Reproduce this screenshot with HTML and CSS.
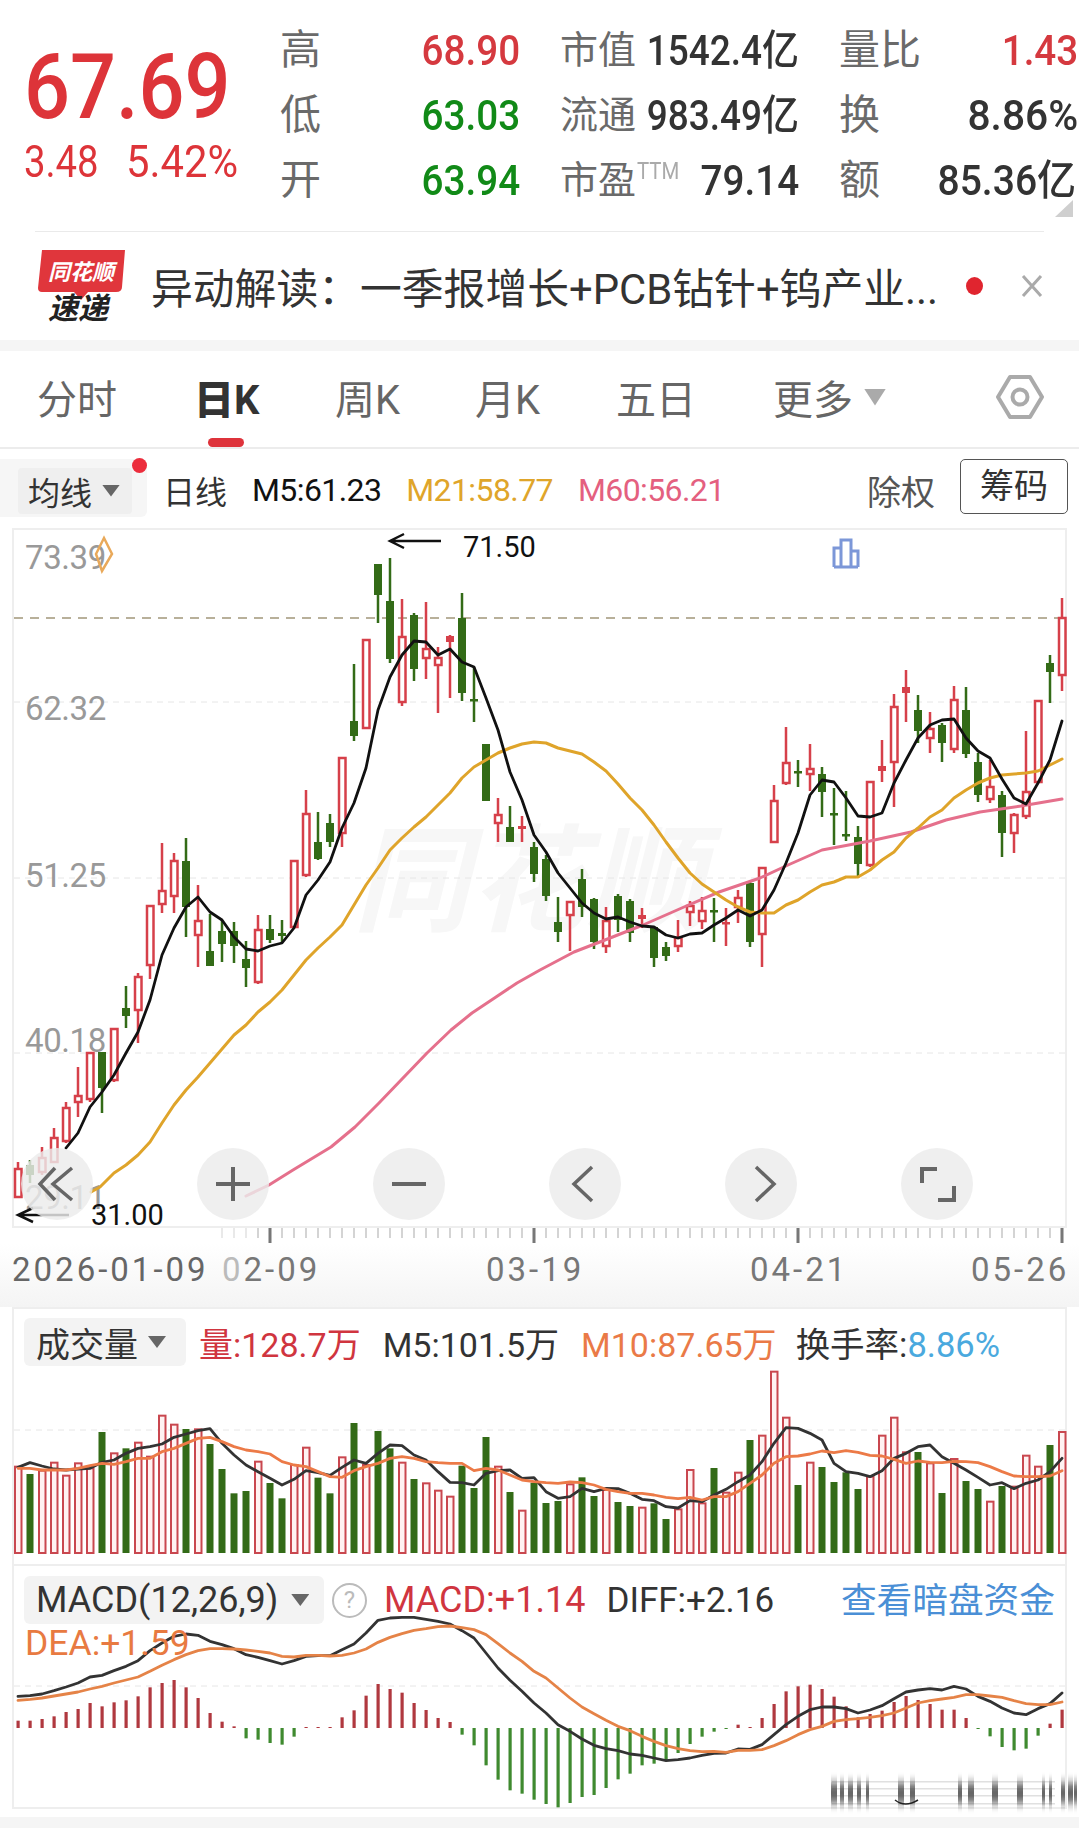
FILE: index.html
```html
<!DOCTYPE html>
<html lang="zh-CN">
<head>
<meta charset="utf-8">
<title>K线</title>
<link rel="stylesheet" href="styles.css">
</head>
<body>
<div class="page">
  <section class="quote">
    <div class="price">
      <div class="price-main">67.69</div>
      <div class="price-sub"><span class="sub-a">3.48</span><span class="sub-b">5.42%</span></div>
    </div>
    <div class="stats">
      <div class="cell"><span class="lab lab-lg lab-first">高</span><span class="num up">68.90</span></div>
      <div class="cell"><span class="lab">市值</span><span class="num tight">1542.4亿</span></div>
      <div class="cell"><span class="lab lab-lg">量比</span><span class="num up">1.43</span></div>
      <div class="cell"><span class="lab lab-lg lab-first">低</span><span class="num down">63.03</span></div>
      <div class="cell"><span class="lab">流通</span><span class="num tight">983.49亿</span></div>
      <div class="cell"><span class="lab lab-lg">换</span><span class="num wide">8.86%</span></div>
      <div class="cell"><span class="lab lab-lg lab-first">开</span><span class="num down">63.94</span></div>
      <div class="cell"><span class="lab">市盈<sup class="ttm">TTM</sup></span><span class="num">79.14</span></div>
      <div class="cell"><span class="lab lab-lg">额</span><span class="num inset">85.36亿</span></div>
    </div>
    <i class="corner"></i>
  </section>
  <div class="rule"></div>

  <section class="news">
    <svg class="logo" viewBox="0 0 88 72" width="88" height="72" aria-hidden="true">
      <path d="M4 0H87L84 37Q84 42 78 42H50L43 50L36 42H4Q0 42 0 38Z" fill="#e0363c"/>
      <text x="43" y="30" class="logo-top">同花顺</text>
      <text x="40" y="69" class="logo-bot">速递</text>
    </svg>
    <div class="news-text">异动解读：一季报增长+PCB钻针+钨产业...</div>
    <i class="news-dot"></i>
    <svg class="news-close" viewBox="0 0 22 22" width="22" height="22" aria-hidden="true"><path d="M2 1L20 21M20 1L2 21"/></svg>
  </section>
  <div class="band"></div>

  <nav class="tabs">
    <span class="tab">分时</span>
    <span class="tab tab-on"><b class="tab-ri">日</b>K<i class="tab-bar"></i></span>
    <span class="tab">周K</span>
    <span class="tab">月K</span>
    <span class="tab">五日</span>
    <span class="tab tab-more">更多<i class="tab-tri"></i></span>
    <svg class="gear" viewBox="0 0 48 44" width="48" height="44" aria-hidden="true"><path d="M14 2H34L46 22L34 42H14L2 22Z"/><circle cx="24" cy="22" r="7.5"/></svg>
  </nav>

  <div class="ma-row">
    <div class="ma-btn"><div class="ma-btn-in">均线<i class="tri"></i></div><i class="ma-dot"></i></div>
    <span class="ma-t ma-cn">日线</span>
    <span class="ma-t ma-5">M5:61.23</span>
    <span class="ma-t ma-21">M21:58.77</span>
    <span class="ma-t ma-60">M60:56.21</span>
    <span class="ma-fq">除权</span>
    <span class="ma-chip">筹码</span>
  </div>

  <section class="panel panel-main">
    <svg id="main" class="chart" viewBox="14 530 1051 696" width="1051" height="696" aria-label="日K线图"></svg>
    <div class="ctrls">
      <button class="ctrl"><svg viewBox="0 0 72 72" width="72" height="72"><path d="M34 20L19 36L34 52M51 20L32 36L51 52"/></svg></button>
      <button class="ctrl"><svg viewBox="0 0 72 72" width="72" height="72"><path class="thick" d="M19 36H53M36 19V53"/></svg></button>
      <button class="ctrl"><svg viewBox="0 0 72 72" width="72" height="72"><path class="thick" d="M19 36H53"/></svg></button>
      <button class="ctrl"><svg viewBox="0 0 72 72" width="72" height="72"><path d="M43 19L25 36L43 53"/></svg></button>
      <button class="ctrl"><svg viewBox="0 0 72 72" width="72" height="72"><path d="M31 19L49 36L31 53"/></svg></button>
      <button class="ctrl"><svg viewBox="0 0 72 72" width="72" height="72"><path class="thick" d="M36 21H21V35M37 52H53V38"/></svg></button>
    </div>
  </section>

  <section class="axis">
    <svg id="ticks" class="ticks" viewBox="0 1228 1079 16" width="1079" height="16" aria-hidden="true"></svg>
    <div class="dates">
      <span class="date date-first">2026-01-09</span>
      <span class="date"><span class="dim">0</span>2-09</span>
      <span class="date">03-19</span>
      <span class="date">04-21</span>
      <span class="date">05-26</span>
    </div>
  </section>

  <section class="panel panel-vol">
    <div class="legend">
      <div class="pick">成交量<i class="tri"></i></div>
      <span class="lg up-t">量:128.7万</span>
      <span class="lg">M5:101.5万</span>
      <span class="lg or-t">M10:87.65万</span>
      <span class="lg lg-rate">换手率:<span class="bl-t">8.86%</span></span>
    </div>
    <svg id="vol" class="chart" viewBox="14 1309 1051 255" width="1051" height="255" aria-label="成交量图"></svg>
  </section>

  <section class="panel panel-macd">
    <div class="legend legend-macd">
      <div class="pick pick-macd">MACD(12,26,9)<i class="tri"></i></div>
      <span class="help">?</span>
      <span class="lg up-t">MACD:+1.14</span>
      <span class="lg lg-diff">DIFF:+2.16</span>
      <span class="lg-link">查看暗盘资金</span>
      <span class="lg-dea">DEA:+1.59</span>
    </div>
    <svg id="macd" class="chart" viewBox="14 1568 1051 239" width="1051" height="239" aria-label="MACD图"></svg>
  </section>
  <div class="foot"><div class="band"></div></div>
</div>
<script src="script.js"></script>
</body>
</html>
```
FILE: styles.css
```css
* { box-sizing: border-box; }
html, body { margin: 0; padding: 0; background: #fff; overflow: hidden; }
body { font-family: Roboto, "Noto Sans CJK SC", sans-serif; color: #333; }
.page { width: 1079px; height: 1832px; overflow: hidden; }
i { display: block; }

/* quote header */
.quote { position: relative; height: 231px; display: flex; }
.price { width: 282px; padding: 34px 0 0 24px; color: #dd3439; }
.price-main { font-size: 91px; line-height: 106px; font-weight: 500; transform: scaleX(.89); transform-origin: left; white-space: nowrap; }
.price-sub { display: flex; margin-top: -4px; font-size: 44px; line-height: 52px; white-space: nowrap; }
.sub-a { width: 102px; transform: scaleX(.87); transform-origin: left; }
.sub-b { transform: scaleX(.95); transform-origin: left; }
.stats { flex: 1; display: grid; grid-template-columns: 238px 239px 239px; column-gap: 40px; grid-auto-rows: 65px; padding-top: 18px; margin-right: -7px; }
.cell { display: flex; justify-content: space-between; align-items: center; white-space: nowrap; }
.lab { flex: none; font-size: 38px; line-height: 65px; color: #6a6a6a; }
.lab-lg { font-size: 41px; }
.lab-first { margin-left: -2px; }
.ttm { font-size: 24px; line-height: 0; color: #aaa; vertical-align: 14px; display: inline-block; transform: scaleX(.85); transform-origin: left; margin-left: 1px; }
.num { flex: none; margin-left: -40px; font-size: 42px; font-weight: 500; line-height: 65px; color: #333; display: inline-block; transform: scaleX(.92); transform-origin: right; }
.num.tight { transform: scaleX(.88); }
.num.wide { transform: scaleX(.97); }
.num.inset { margin-right: 2px; transform: scaleX(.93); }
.up { color: #d5393f; }
.down { color: #118a17; }
.corner { position: absolute; right: 6px; top: 200px; width: 18px; height: 17px; background: #cfcfcf; clip-path: polygon(100% 0, 100% 100%, 0 100%); }
.rule { height: 1px; margin: 0 35px; background: #eaeaea; }

/* news */
.news { height: 108px; display: flex; align-items: center; padding: 0 36px 0 38px; }
.logo { flex: none; margin-right: 25px; overflow: visible; }
.logo-top { font-size: 22px; font-weight: 700; font-style: italic; fill: #fff; text-anchor: middle; }
.logo-bot { font-size: 30px; font-weight: 700; font-style: italic; fill: #222; text-anchor: middle; }
.news-text { flex: 1; font-size: 41.8px; color: #333; white-space: nowrap; }
.news-dot { flex: none; width: 17px; height: 18px; border-radius: 50%; background: #e0252f; }
.news-close { flex: none; margin-left: 38px; fill: none; stroke: #aaa; stroke-width: 3; }
.band { height: 11px; background: #f5f5f5; }

/* tabs */
.tabs { height: 98px; display: grid; grid-template-columns: 157px 141px 140px 141px 157px 1fr auto; align-items: center; padding: 0 35px 4px 37px; border-bottom: 2px solid #ececec; }
.tab { position: relative; font-size: 40px; color: #666; white-space: nowrap; }
.tab-on { font-weight: 700; color: #333; }
.tab-ri { font-weight: 900; }
.tab-bar { position: absolute; left: 14px; top: 70px; width: 36px; height: 9px; border-radius: 5px; background: #de333b; }
.tab-more { display: flex; align-items: center; }
.tab-tri { margin: 0 0 0 11px; width: 22px; height: 17px; background: #aaa; clip-path: polygon(0 0, 100% 0, 50% 100%); }
.gear { fill: none; stroke: #aaa; stroke-width: 4; stroke-linejoin: round; }

/* MA row */
.ma-row { height: 79px; display: flex; align-items: center; gap: 25px; padding-right: 11px; }
.ma-btn { position: relative; flex: none; width: 147px; height: 58px; margin: -2px -9px 0 0; padding: 9px 15px 3px 18px; background: #f6f6f6; border-radius: 0 6px 6px 0; }
.ma-btn-in { height: 100%; display: flex; align-items: center; padding-left: 10px; background: #efefef; border-radius: 4px; font-size: 32px; color: #333; }
.tri { flex: none; margin-left: 10px; width: 18px; height: 12px; background: #666; clip-path: polygon(0 0, 100% 0, 50% 100%); }
.ma-dot { position: absolute; left: 132px; top: -1px; width: 15px; height: 15px; border-radius: 50%; background: #ec2d3c; }
.ma-t { font-size: 32px; letter-spacing: -.6px; white-space: nowrap; margin-top: 2px; }
.ma-cn { letter-spacing: 0; color: #333; }
.ma-5 { color: #111; }
.ma-21 { color: #dfa52a; }
.ma-60 { color: #e4607f; }
.ma-fq { margin-left: auto; font-size: 34px; color: #555; margin-top: 4px; }
.ma-chip { width: 108px; height: 55px; margin-left: 0; margin-top: -4px; border: 1.5px solid #555; border-radius: 5px; text-align: center; font-size: 34px; line-height: 53px; color: #333; }

/* panels */
.panel { position: relative; width: 1055px; margin-left: 12px; border: 2px solid #eee; background: #fff; }
.panel-main { height: 700px; }
.panel-vol { height: 259px; }
.panel-macd { height: 243px; border-top: 0; margin-top: 0; }
.chart { display: block; overflow: visible; }
.ctrls { position: absolute; left: 7px; top: 618px; display: flex; gap: 104px; }
.ctrl { flex: none; width: 72px; height: 72px; padding: 0; border: 0; border-radius: 50%; background: rgba(236, 236, 236, .82); }
.ctrl svg { display: block; fill: none; stroke: #666; stroke-width: 3.5; }
.ctrl .thick { stroke-width: 4; }

/* chart text */
.ylab { font-size: 33px; fill: #999; letter-spacing: -.4px; }
.mark { font-size: 29px; fill: #111; }
.wm { font-size: 116px; font-weight: 700; font-style: italic; fill: #f7f7f7; }

/* axis */
.axis { height: 79px; background: linear-gradient(#fff 20%, #f4f4f4); }
.ticks { display: block; }
.dates { display: grid; grid-template-columns: 210px 264px 264px 221px auto; padding: 1px 0 0 12px; }
.date { font-size: 33px; letter-spacing: 3px; color: #777; line-height: 50px; white-space: nowrap; }
.date-first { color: #666; }
.dim { color: #bbb; }

/* legends */
.legend { position: absolute; left: 10px; top: 8px; right: 0; display: flex; align-items: center; gap: 22px; white-space: nowrap; z-index: 1; }
.pick { height: 48px; width: 162px; margin-right: -9px; display: flex; align-items: center; padding-left: 12px; background: #f3f3f3; border-radius: 6px; font-size: 34px; color: #333; }
.lg { font-size: 34px; color: #333; }
.lg-rate { margin-left: -3px; font-size: 34.5px; }
.up-t { color: #d0353f; }
.or-t { color: #ea7a47; }
.bl-t { color: #4aa9de; }
.legend-macd { top: 10px; gap: 0; }
.legend-macd .lg { font-size: 36px; }
.pick-macd { width: 300px; margin: 0 8px 0 0; font-size: 36px; }
.pick-macd .tri { margin-left: 13px; }
.pick .tri { width: 18px; }
.help { flex: none; width: 35px; height: 35px; margin-right: 17px; border: 2px solid #bbb; border-radius: 50%; text-align: center; font-size: 24px; line-height: 30px; color: #bbb; }
.legend-macd .lg-diff { margin-left: 21px; font-size: 35px; }
.lg-link { margin-left: auto; margin-right: 10px; font-size: 35.7px; line-height: 44px; position: relative; top: 1px; color: #4a8fd6; }
.lg-dea { position: absolute; left: 1px; top: 45px; font-size: 35.5px; line-height: 44px; color: #e87a41; }

.foot { height: 23px; padding-top: 8px; }
```
FILE: script.js
```js
var SVG_NS = 'http://www.w3.org/2000/svg';
function el(parent, name, attrs, text) {
  var n = document.createElementNS(SVG_NS, name);
  for (var k in attrs) n.setAttribute(k, attrs[k]);
  if (text) n.textContent = text;
  parent.appendChild(n);
  return n;
}
var X = function (i) { return 18 + 12 * i; };
var RED = '#d6404a', GREEN = '#336b17';

function line(svg, pts, color, w) {
  el(svg, 'polyline', { points: pts.map(function (p) { return p[0] + ',' + p[1]; }).join(' '), fill: 'none', stroke: color, 'stroke-width': w, 'stroke-linejoin': 'round', 'stroke-linecap': 'round' });
}
function series(start, ys) { return ys.map(function (y, i) { return [X(start + i), y]; }); }

/* ---------- main chart ---------- */
var main = document.getElementById('main');
el(main, 'text', { x: 353, y: 922, 'class': 'wm', textLength: 350 }, '同花顺');
[702, 878, 1053].forEach(function (y) {
  el(main, 'line', { x1: 14, x2: 1065, y1: y, y2: y, stroke: '#e6e6e6', 'stroke-width': 1, 'stroke-dasharray': '6 5' });
});
el(main, 'line', { x1: 14, x2: 1065, y1: 618, y2: 618, stroke: '#b8b09a', 'stroke-width': 2, 'stroke-dasharray': '9 7' });
[['73.39', 569], ['62.32', 720], ['51.25', 887], ['40.18', 1052], ['29.11', 1209]].forEach(function (l) {
  el(main, 'text', { x: 25, y: l[1], 'class': 'ylab' }, l[0]);
});

/* i order: colour, wick top, wick bottom, body top, body bottom */
var C = [
['r',1162,1198,1168,1198],['g',1160,1183,1165,1175],['r',1147,1175,1157,1173],['r',1128,1163,1137,1163],['r',1102,1143,1107,1142],
['r',1067,1117,1095,1103],['r',1052,1102,1052,1100],['g',1052,1113,1052,1088],['r',1028,1082,1028,1081],['g',986,1028,1008,1016],
['r',973,1043,976,1011],['r',905,979,905,966],['r',843,913,890,905],['r',853,913,860,897],['g',838,937,861,907],
['r',885,967,920,936],['g',914,966,951,966],['g',920,962,931,944],['g',922,963,931,946],['g',941,987,959,968],
['r',915,984,929,983],['g',915,943,929,940],['g',920,943,933,936],['r',860,928,860,928],['r',790,877,813,876],
['g',812,860,842,859],['g',814,847,823,842],['r',757,847,757,834],['g',664,741,721,736],['r',639,729,639,729],
['g',564,623,564,595],['g',558,663,601,659],['r',599,706,636,703],['g',613,681,615,669],['r',602,679,648,659],
['r',647,713,657,666],['r',635,698,636,642],['g',593,701,618,693],['g',667,722,699,701],['g',744,801,744,801],
['r',798,842,814,824],['g',806,842,827,842],['r',816,842,826,829],['g',842,882,847,874],['g',855,901,859,896],
['g',897,942,922,932],['r',901,951,901,916],['g',869,917,879,907],['g',898,949,899,942],['r',907,953,920,947],
['g',894,932,896,920],['g',899,942,901,933],['r',908,928,915,919],['g',927,967,927,958],['g',942,961,947,956],
['r',920,952,937,947],['r',901,926,905,913],['r',897,929,910,922],['g',898,942,910,912],['r',908,946,922,923],
['r',890,923,897,908],['g',882,947,883,942],['r',867,967,867,935],['r',785,843,800,843],['r',727,785,762,784],
['g',760,787,771,773],['r',744,791,768,775],['g',767,817,774,792],['g',788,845,813,814],['g',791,841,834,836],
['g',826,878,837,864],['r',781,867,781,866],['r',740,782,766,771],['r',694,807,706,763],['r',670,722,687,693],
['g',695,743,710,731],['r',712,753,728,739],['g',723,762,725,743],['r',686,753,699,750],['g',687,758,710,754],
['g',753,802,762,795],['r',760,803,786,800],['g',791,857,795,833],['r',813,853,814,834],['r',731,819,791,817],
['r',700,783,700,783],['g',655,703,663,672],['r',598,691,617,676]];
C.forEach(function (c, i) {
  var x = X(i), col = c[0] === 'r' ? RED : GREEN, h = c[4] - c[3];
  el(main, 'rect', { x: x - 1.25, y: c[1], width: 2.5, height: c[2] - c[1], fill: col });
  if (c[0] === 'g' || h < 7) {
    el(main, 'rect', { x: x - 4, y: c[3], width: 8, height: Math.max(h, 2.5), fill: col });
  } else {
    el(main, 'rect', { x: x - 3, y: c[3] + 1, width: 6.5, height: h - 2, fill: '#fff', stroke: col, 'stroke-width': 2.5 });
  }
});

line(main, [[246,1196],[269,1185],[293,1170],[331,1147],[355,1127],[379,1103],[403,1078],[427,1053],[451,1030],[472,1013],[496,997],[517,983],[540,970],[574,952],[605,940],[643,925],[684,907],[719,892],[760,878],[788,865],[822,850],[870,841],[911,832],[946,820],[980,812],[1021,806],[1062,799]], '#e5708c', 3);
line(main, [[91,1192],[100,1187],[114,1173]].concat(series(9, [1165,1155,1142,1123,1105,1090,1077,1063,1049,1035,1025,1012,1002,990,975,960,948,937,925,905,885,868,850,838,827,817,805,793,778,767,760,753,748,744,742,743,748,751,754,762,771,784,798,810,825,842,858,873,884,892,900,907,912,913,913,905,900,892,885,882,877,877,870,860,852,838,828,817,810,798,790,783,778,775,774,773,771,765,759])), '#dfa42a', 3);
line(main, series(4, [1148,1133,1107,1092,1075,1053,1032,1000,955,928,907,897,912,920,937,949,951,946,943,928,895,880,862,828,803,768,710,677,655,641,642,655,649,662,667,698,730,772,800,835,852,873,888,903,913,919,917,922,926,927,935,938,934,933,925,918,910,916,910,890,863,833,795,780,782,798,816,817,813,783,760,738,725,720,719,738,751,758,779,798,804,783,760,721]), '#111', 2.8);

/* high / low marks */
el(main, 'path', { d: 'M441 541H390M404 534L390 541L404 548', fill: 'none', stroke: '#111', 'stroke-width': 2.5 });
el(main, 'text', { x: 463, y: 557, 'class': 'mark' }, '71.50');
el(main, 'path', { d: 'M69 1215H18M33 1208L18 1215L33 1222', fill: 'none', stroke: '#111', 'stroke-width': 2.5 });
el(main, 'text', { x: 91, y: 1225, 'class': 'mark' }, '31.00');

/* diamond and bar-chart markers */
el(main, 'path', { d: 'M104 538L112 554L102 571L96 554Z', fill: 'none', stroke: '#e9a95a', 'stroke-width': 2.5 });
el(main, 'path', { d: 'M834 567V548H841V567M841 567V540H851V567M851 567V551H858V567M834 567H858', fill: 'none', stroke: '#7c97d8', 'stroke-width': 3 });

/* ---------- tick axis ---------- */
var ticks = document.getElementById('ticks');
for (var t = 17; t < 88; t++) {
  var major = (t === 21 || t === 43 || t === 65 || t === 87);
  el(ticks, 'rect', { x: X(t) - (major ? 1.5 : .5), y: 1228, width: major ? 3 : 1, height: major ? 15 : 10, fill: major ? '#777' : '#aaa', opacity: t < 20 ? .5 : 1 });
}

/* ---------- volume ---------- */
var vol = document.getElementById('vol');
var vy = function (z) { return 1300 + z / 3; };
el(vol, 'line', { x1: 14, x2: 1065, y1: 1430, y2: 1430, stroke: '#e6e6e6', 'stroke-dasharray': '6 5' });
var V = [['r',500],['g',522],['r',512],['r',488],['r',527],['r',490],['r',505],['g',396],['r',460],['g',445],['r',428],['r',470],['r',347],['r',374],['g',387],['r',388],['g',432],['g',507],['g',580],['g',573],['r',485],['g',549],['g',595],['r',495],['r',443],['g',533],['g',580],['r',472],['g',369],['r',495],['g',393],['g',445],['r',488],['g',537],['r',550],['r',572],['r',590],['g',497],['g',564],['g',411],['r',500],['g',576],['r',632],['g',548],['g',609],['g',603],['r',553],['g',532],['g',588],['r',570],['g',606],['g',618],['r',623],['g',610],['g',657],['r',628],['r',510],['r',610],['g',504],['r',578],['r',518],['g',420],['r',407],['r',215],['r',353],['g',555],['r',488],['g',501],['g',546],['g',517],['g',567],['r',530],['r',407],['r',353],['r',457],['g',456],['r',490],['g',579],['r',477],['g',543],['g',567],['r',605],['g',558],['r',560],['r',467],['r',500],['g',435],['r',396]];
V.forEach(function (b, i) {
  var y = vy(b[1]), base = 1553;
  if (b[0] === 'g') el(vol, 'rect', { x: X(i) - 3.5, y: y, width: 7, height: base - y, fill: '#336b17' });
  else el(vol, 'rect', { x: X(i) - 3, y: y, width: 6.5, height: base - y, fill: '#fff2f2', stroke: '#c9474f', 'stroke-width': 2 });
});
line(vol, series(0, [502,488,498,507,510,507,505,487,480,460,445,440,432,412,402,392,386,430,465,495,515,535,555,538,512,518,526,502,480,490,460,435,437,465,480,515,547,548,555,520,512,510,535,533,575,595,590,565,575,565,566,580,598,602,620,624,602,605,585,568,545,525,485,430,383,385,400,420,490,515,520,530,512,475,460,440,435,470,490,510,532,555,548,566,550,540,515,475].map(vy)), '#333', 2.8);
line(vol, series(0, [505,505,510,510,510,505,497,490,493,485,475,475,455,445,430,415,412,425,440,450,455,462,485,495,500,515,530,532,512,500,490,475,470,475,485,488,490,490,512,505,510,525,540,545,548,550,546,548,555,568,575,580,580,585,592,596,592,600,590,590,575,550,525,490,470,468,462,453,458,452,457,466,468,478,490,483,487,488,484,485,488,500,515,528,530,530,528,512].map(vy)), '#ec7a47', 2.8);

/* ---------- MACD ---------- */
var macd = document.getElementById('macd');
var my = function (z) { return 1560 + z / 3; };
el(macd, 'line', { x1: 14, x2: 1065, y1: 1688, y2: 1688, stroke: '#e6e6e6', 'stroke-dasharray': '6 5' });
var H = [488,488,483,475,462,453,435,445,433,427,415,388,375,366,388,420,465,491,505,541,545,555,560,536,507,507,507,478,457,413,378,393,404,435,456,480,492,530,562,622,665,697,707,725,738,748,735,717,711,690,664,647,622,617,606,585,558,536,521,512,500,507,480,438,400,385,380,393,416,445,478,468,458,432,414,426,438,455,455,480,512,535,567,577,572,533,497,455];
H.forEach(function (z, i) {
  var y = my(z), base = 1730, up = y < base;
  el(macd, 'rect', { x: X(i) - 1.5, y: Math.min(y, base), width: 3.2, height: Math.max(Math.abs(base - y), 1), fill: up ? '#b0383f' : '#3f8a2f' });
});
line(macd, series(0, [415,413,408,398,387,375,357,352,338,325,308,278,255,235,228,232,250,260,272,290,298,308,318,308,295,293,293,275,258,225,187,180,178,178,184,190,198,218,240,285,330,367,400,435,465,500,520,543,562,572,578,588,592,600,608,605,600,592,586,585,573,574,560,530,500,475,455,447,447,452,465,456,443,422,402,396,392,396,385,393,415,430,450,465,470,452,437,405].map(my)), '#333', 2.8);
line(macd, series(0, [427,424,420,414,408,402,393,385,375,366,357,340,322,305,290,278,272,272,273,276,280,285,295,297,292,292,294,292,285,273,253,238,227,217,212,206,204,209,215,230,257,285,310,340,360,390,420,447,467,487,505,518,535,550,563,572,578,581,580,583,577,577,575,563,548,530,515,505,490,485,482,478,473,465,450,435,428,423,418,410,410,414,418,428,437,440,440,432].map(my)), '#e58347', 2.8);

/* blurred corner watermark */
var defs = el(macd, 'defs', {});
var f = el(defs, 'filter', { id: 'vblur', x: '-10%', y: '-60%', width: '120%', height: '220%' });
el(f, 'feGaussianBlur', { stdDeviation: '0.5 5' });
var g = el(macd, 'g', { filter: 'url(#vblur)' });
[[851,6],[860,4],[868,5],[877,4],[886,3],[918,6],[930,5],[978,4],[988,6],[1012,6],[1037,6],[1062,3],[1069,3],[1081,4],[1088,5],[1094,3]].forEach(function (b) {
  el(g, 'rect', { x: b[0] - 20, y: 1785, width: b[1], height: 20, fill: '#222', opacity: .7 });
});
[1783, 1790, 1797, 1805].forEach(function (y) {
  el(macd, 'rect', { x: 832, y: y, width: 223, height: 1.5, fill: '#555', opacity: .18 });
});
el(macd, 'path', { d: 'M895 1802Q905 1810 918 1802', fill: 'none', stroke: '#222', 'stroke-width': 1.5 });
```
